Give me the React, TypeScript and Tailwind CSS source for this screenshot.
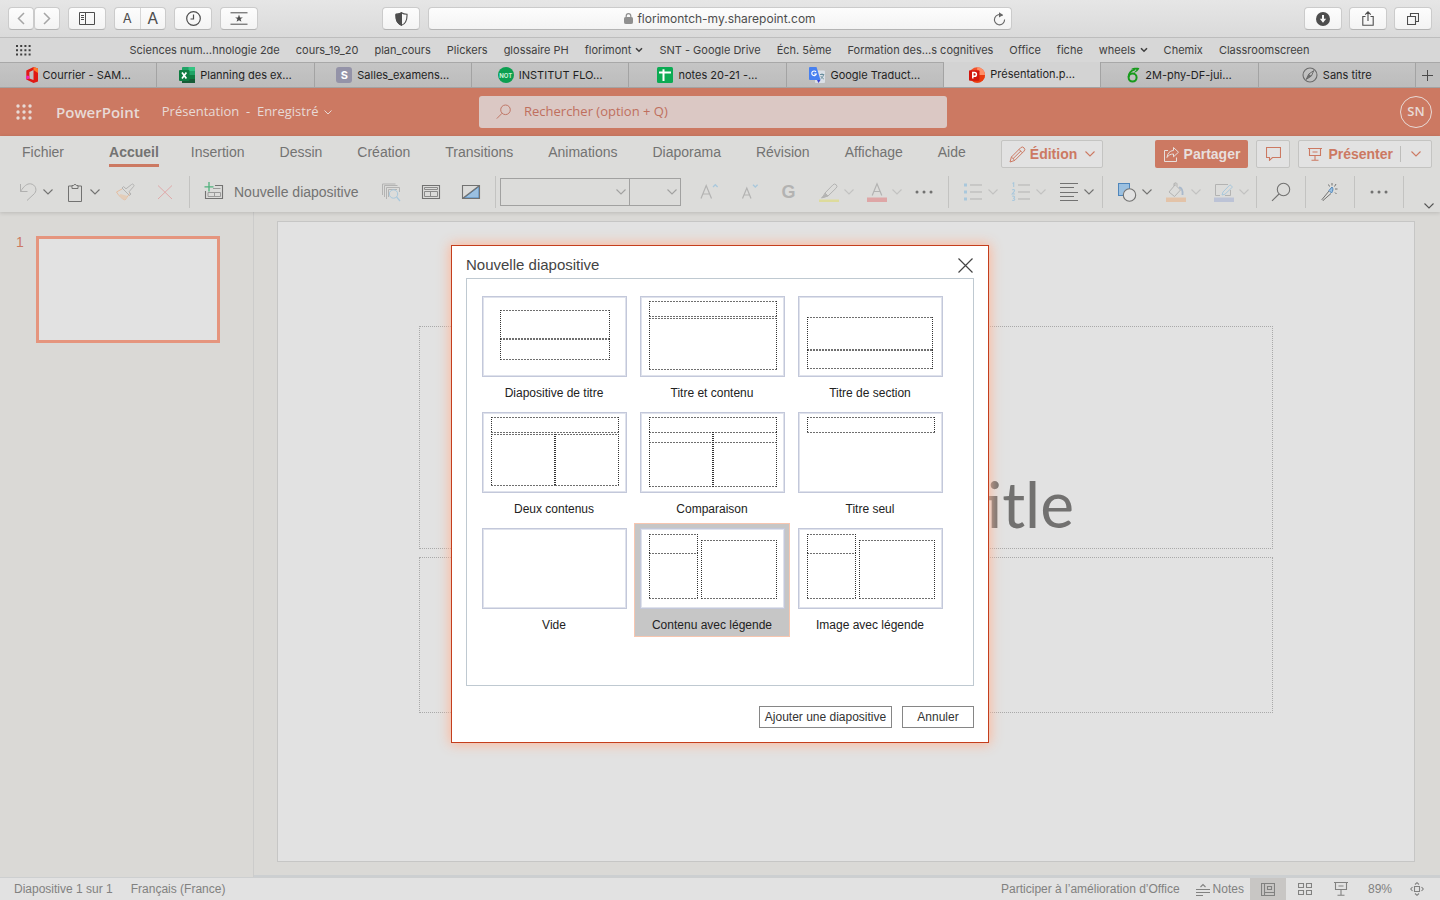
import React from 'react';

const SAFARI = "font-['Inter','Liberation_Sans',sans-serif]";
const SEGOE = "font-['Open_Sans','Noto_Sans',sans-serif]";

type IconProps = { children: React.ReactNode; className?: string; w?: number; h?: number };

function Icon({ children, className = '', w = 20, h = 20 }: IconProps) {
  return (
    <svg
      width={w}
      height={h}
      viewBox={`0 0 ${w} ${h}`}
      fill="none"
      stroke="currentColor"
      strokeWidth="1"
      className={`shrink-0 ${className}`}
      aria-hidden="true"
    >
      {children}
    </svg>
  );
}

function Chevron({ className = '' }: { className?: string }) {
  return (
    <Icon w={10} h={6} className={className}>
      <path d="M0.5 0.5 L5 5 L9.5 0.5" strokeWidth="1.1" />
    </Icon>
  );
}

/* ---------- Browser chrome ---------- */

const chromeButton =
  'flex h-[23px] items-center justify-center rounded-[4px] border border-[#cbcbcb] border-b-[#b4b4b4] bg-gradient-to-b from-[#fdfdfd] to-[#f3f3f3] text-[#4d4d4d]';

function BrowserToolbar() {
  return (
    <div className="grid h-[38px] grid-cols-[1fr_584px_1fr] items-center gap-2 border-b border-[#bdbdbd] bg-gradient-to-b from-[#e6e6e6] to-[#dadada] px-2">
      <div className="flex items-center">
        <button aria-label="Page précédente" className={`${chromeButton} w-[26px] text-[#a5a5a5]`}>
          <Icon w={8} h={13}><path d="M7 1 L1.5 6.5 L7 12" strokeWidth="1.5" /></Icon>
        </button>
        <button aria-label="Page suivante" className={`${chromeButton} w-[26px] text-[#a5a5a5]`}>
          <Icon w={8} h={13}><path d="M1 1 L6.5 6.5 L1 12" strokeWidth="1.5" /></Icon>
        </button>
        <button aria-label="Barre latérale" className={`${chromeButton} ml-2 w-[38px]`}>
          <Icon w={16} h={13}>
            <path d="M0.5 0.5 H15.5 V12.5 H0.5 Z M6.5 0.5 V12.5" />
            <path d="M2 3.5 H5 M2 5.5 H5 M2 7.5 H5" />
          </Icon>
        </button>
        <div className={`${chromeButton} ml-2 w-[52px]`}>
          <button aria-label="Réduire le texte" className="flex-1 border-r border-[#d6d6d6] text-[13px] leading-[21px]">A</button>
          <button aria-label="Agrandir le texte" className="flex-1 text-[16px] leading-[21px]">A</button>
        </div>
        <button aria-label="Historique" className={`${chromeButton} ml-2 w-[38px]`}>
          <Icon w={15} h={15}>
            <circle cx="7.5" cy="7.5" r="6.8" strokeWidth="1.2" />
            <path d="M7.5 3.5 V8 H4.5" strokeWidth="1.2" />
          </Icon>
        </button>
        <button aria-label="Favoris" className={`${chromeButton} ml-2 w-[38px]`}>
          <Icon w={18} h={13}>
            <path d="M0.5 0.8 H17.5 M0.5 12.2 H17.5" />
            <path d="M9 2.6 L10 5.4 H12.9 L10.6 7.1 L11.4 9.8 L9 8.2 L6.6 9.8 L7.4 7.1 L5.1 5.4 H8 Z" fill="currentColor" stroke="none" />
          </Icon>
        </button>
        <button aria-label="Rapport de confidentialité" className={`${chromeButton} ml-auto w-[38px]`}>
          <Icon w={13} h={14}>
            <path d="M6.5 0.7 C8 1.8 10 2.2 12 2.2 C12.3 8 11 11.5 6.5 13.3 C2 11.5 0.7 8 1 2.2 C3 2.2 5 1.8 6.5 0.7 Z" strokeWidth="1.1" />
            <path d="M6.5 0.7 V13.3 C2 11.5 0.7 8 1 2.2 C3 2.2 5 1.8 6.5 0.7 Z" fill="currentColor" />
          </Icon>
        </button>
      </div>
      <div className={`${chromeButton} relative text-[12px] text-[#3c3c3c]`}>
        <Icon w={9} h={11} className="mr-1 text-[#8f8f8f]">
          <rect x="0.5" y="4.5" width="8" height="6" rx="0.8" fill="currentColor" />
          <path d="M2.2 5 V3 A2.3 2.3 0 0 1 6.8 3 V5" strokeWidth="1.2" />
        </Icon>
        <span>florimontch-my.sharepoint.com</span>
        <button aria-label="Actualiser" className="absolute right-[5px] text-[#666666]">
          <Icon w={13} h={14}>
            <path d="M9.5 3.6 A5.1 5.1 0 1 0 11.6 7.6" strokeWidth="1.1" />
            <path d="M6 0.2 L10.2 2.9 L6 5.4 Z" fill="currentColor" stroke="none" />
          </Icon>
        </button>
      </div>
      <div className="flex items-center justify-end gap-[7px]">
        <button aria-label="Téléchargements" className={`${chromeButton} w-[38px]`}>
          <Icon w={14} h={14}>
            <circle cx="7" cy="7" r="7" fill="currentColor" stroke="none" />
            <path d="M7 3 V8" stroke="#f8f8f8" strokeWidth="2" />
            <path d="M3.8 6.8 H10.2 L7 10.8 Z" fill="#f8f8f8" stroke="none" />
          </Icon>
        </button>
        <button aria-label="Partager la page" className={`${chromeButton} w-[38px]`}>
          <Icon w={12} h={15}>
            <path d="M3.5 5.5 H0.8 V14.3 H11.2 V5.5 H8.5 M6 10 V1 M3.2 3.6 L6 0.8 L8.8 3.6" strokeWidth="1.1" />
          </Icon>
        </button>
        <button aria-label="Tous les onglets" className={`${chromeButton} w-[38px]`}>
          <Icon w={12} h={12}>
            <path d="M0.5 3.5 H8.5 V11.5 H0.5 Z M3.5 3.5 V0.5 H11.5 V8.5 H8.5" strokeWidth="1.1" />
          </Icon>
        </button>
      </div>
    </div>
  );
}

const bookmarks: { label: string; menu?: boolean }[] = [
  { label: 'Sciences num…hnologie 2de' },
  { label: 'cours_19_20' },
  { label: 'plan_cours' },
  { label: 'Plickers' },
  { label: 'glossaire PH' },
  { label: 'florimont', menu: true },
  { label: 'SNT - Google Drive' },
  { label: 'Éch. 5ème' },
  { label: 'Formation des…s cognitives' },
  { label: 'Office' },
  { label: 'fiche' },
  { label: 'wheels', menu: true },
  { label: 'Chemix' },
  { label: 'Classroomscreen' },
];

function BookmarkBar() {
  return (
    <nav aria-label="Signets" className="flex h-6 items-center bg-[#d7d7d7] px-4 text-[11px] text-[#404040]">
      <button aria-label="Sites favoris" className="text-[#404040]">
        <Icon w={15} h={11}>
          <path d="M0 1 H15 M0 5.2 H15 M0 9.4 H15" strokeWidth="2" strokeDasharray="2 2.2" />
        </Icon>
      </button>
      <div className="flex flex-1 items-center justify-center gap-4 whitespace-nowrap">
        {bookmarks.map((b) => (
          <a key={b.label} href="#" className="flex items-center gap-1">
            {b.label}
            {b.menu && (
              <Icon w={8} h={6}><path d="M1 1.2 L4 4.2 L7 1.2" strokeWidth="1.6" /></Icon>
            )}
          </a>
        ))}
      </div>
      <span className="w-4" />
    </nav>
  );
}

const OfficeLogo = (
  <Icon w={12} h={16}>
    <g stroke="none" fillRule="evenodd">
      <path d="M7.5 0 L12 1.6 V14.4 L7.5 16 L0.3 12.4 V3.6 Z M7.5 3 L3.4 5 V11.4 L7.5 13 Z" fill="#e01a14" />
      <path d="M7.5 0 L12 1.6 V6 L7.5 3 Z" fill="#ff7a2a" />
      <path d="M0.3 8.5 L3.4 9 V11.4 L0.3 12.4 Z" fill="#f028b8" />
    </g>
  </Icon>
);
const ExcelLogo = (
  <Icon w={16} h={16}>
    <g stroke="none">
      <rect x="3" width="13" height="16" rx="1" fill="#21a366" />
      <rect x="9.5" width="6.5" height="4" fill="#33c481" />
      <rect x="9.5" y="8" width="6.5" height="8" fill="#107c41" />
      <rect x="3" y="12" width="13" height="4" fill="#185c37" />
      <rect y="3" width="10.5" height="11" rx="1" fill="#107c41" />
    </g>
    <path d="M3 5.5 L7.4 11.5 M7.4 5.5 L3 11.5" stroke="#ffffff" strokeWidth="1.7" />
  </Icon>
);
const LetterLogo = (
  <span className="flex h-4 w-4 items-center justify-center rounded-[3px] bg-[#9493a8] text-[11px] font-bold text-white">S</span>
);
const NotLogo = (
  <span className="flex h-4 w-4 items-center justify-center rounded-full bg-[#0c9f50] text-[6px] font-bold text-[#c9efd8]">NOT</span>
);
const SheetLogo = (
  <Icon w={16} h={16}>
    <rect width="16" height="16" rx="1.5" fill="#0bab53" stroke="none" />
    <path d="M2 5.5 H14 M6.5 2.2 V14" stroke="#ffffff" strokeWidth="2" />
  </Icon>
);
const TranslateLogo = (
  <Icon w={16} h={16}>
    <g stroke="none">
      <rect x="6" y="3.5" width="10" height="12.5" rx="1" fill="#dadfe6" />
      <path d="M1 0 H7.5 L11.5 13 H1 A1 1 0 0 1 0 12 V1 A1 1 0 0 1 1 0 Z" fill="#4780f0" />
      <path d="M8 13 H11.5 L9.5 16 Z" fill="#3a3fd0" />
    </g>
    <path d="M7 5 A2.3 2.3 0 1 0 7.3 7 H5.2" stroke="#ffffff" strokeWidth="1.1" />
    <path d="M11 7.5 H15.2 M13 6.4 V7.5 M14.6 7.8 C14 10 12.6 11 11.6 11.8 M11.8 9 C12.6 10.5 13.6 11.2 14.8 12" stroke="#5f8796" strokeWidth="0.9" />
  </Icon>
);
const PowerPointLogo = (
  <Icon w={16} h={16}>
    <g stroke="none">
      <circle cx="8.2" cy="8" r="7.8" fill="#f2512b" />
      <path d="M8.2 0.2 A7.8 7.8 0 0 1 16 8 H8.2 Z" fill="#ff9068" />
      <path d="M0.4 8 H16 A7.8 7.8 0 0 1 0.4 8 Z" fill="#ea3c0e" />
      <rect y="3.2" width="10.5" height="10.5" rx="1" fill="#d2150d" />
    </g>
    <path d="M3.8 11.6 V5.6 H5.6 A1.8 1.8 0 0 1 5.6 9.2 H3.8" stroke="#ffffff" strokeWidth="1.5" />
  </Icon>
);
const OverleafLogo = (
  <Icon w={13} h={16}>
    <circle cx="5.6" cy="10.6" r="4" stroke="#189a1c" strokeWidth="2" />
    <path d="M1.6 10 C1.6 6 4 3.6 8 2.4" stroke="#189a1c" strokeWidth="1.8" />
    <path d="M3.8 2.4 C6 0.6 10 0.6 12.4 1.2 C11.5 3.4 9.5 5.2 6.5 5.8 C8 4.6 9 3.6 9.5 2.8 C8 2.3 6 2.1 3.8 2.4 Z" fill="#189a1c" stroke="none" />
  </Icon>
);
const CompassLogo = (
  <Icon w={16} h={16} className="text-[#6b6b6b]">
    <circle cx="8" cy="8" r="7" strokeWidth="1.1" />
    <path d="M11.8 3.6 L9.4 9 L4.2 12.4 L6.8 7 Z" strokeWidth="1" />
    <path d="M4.2 12.4 L6.8 7 L9.4 9 Z" fill="currentColor" stroke="none" />
  </Icon>
);

const tabs: { label: string; icon: React.ReactNode; active?: boolean }[] = [
  { label: 'Courrier - SAM…', icon: OfficeLogo },
  { label: 'Planning des ex…', icon: ExcelLogo },
  { label: 'Salles_examens…', icon: LetterLogo },
  { label: 'INSTITUT FLO…', icon: NotLogo },
  { label: 'notes 20-21 -…', icon: SheetLogo },
  { label: 'Google Traduct…', icon: TranslateLogo },
  { label: 'Présentation.p…', icon: PowerPointLogo, active: true },
  { label: '2M-phy-DF-jui…', icon: OverleafLogo },
  { label: 'Sans titre', icon: CompassLogo },
];

function TabBar() {
  return (
    <div className="flex h-[26px] border-b border-[#a3a3a3] text-[11px] text-[#1f1f1f]">
      {tabs.map((t) => (
        <button
          key={t.label}
          className={`flex min-w-0 flex-1 items-center justify-center gap-[5px] whitespace-nowrap border-r border-[#a3a3a3] ${
            t.active ? 'bg-[#d3d3d3]' : 'border-t border-t-[#a8a8a8] bg-gradient-to-b from-[#c5c5c5] to-[#bcbcbc]'
          }`}
        >
          {t.icon}
          {t.label}
        </button>
      ))}
      <button aria-label="Nouvel onglet" className="flex w-6 items-center justify-center border-t border-[#a8a8a8] bg-[#c0c0c0] text-[#4a4a4a]">
        <Icon w={11} h={11}><path d="M5.5 0 V11 M0 5.5 H11" /></Icon>
      </button>
    </div>
  );
}

/* ---------- Application header ---------- */

function AppHeader() {
  return (
    <header className={`flex h-12 shrink-0 items-center bg-[#cc7962] pr-2 text-[#e8dad6] ${SEGOE}`}>
      <div className="flex w-[479px] items-center">
        <button aria-label="Lanceur d'applications" className="ml-4">
          <Icon w={16} h={16}>
            <path d="M2 2 H15 M2 8 H15 M2 14 H15" strokeWidth="3.4" strokeLinecap="round" strokeDasharray="0.01 6" />
          </Icon>
        </button>
        <a href="#" className="ml-6 text-[15px] font-semibold">PowerPoint</a>
        <button className="ml-[22px] flex items-center gap-[5px] whitespace-pre text-[13px]">
          {'Présentation  -  Enregistré'}
          <Icon w={8} h={5}><path d="M0.5 0.5 L4 4 L7.5 0.5" /></Icon>
        </button>
      </div>
      <label className="flex h-8 w-[468px] items-center gap-3 rounded-[3px] bg-[#dbc8c4] pl-[17px] text-[#c07767]">
        <Icon w={16} h={16}>
          <circle cx="9.5" cy="5.8" r="4.8" />
          <path d="M6 9.3 L0.8 14.6" />
        </Icon>
        <input
          aria-label="Rechercher"
          placeholder="Rechercher (option + Q)"
          className="min-w-0 flex-1 bg-transparent text-[13px] outline-none placeholder:text-[#bf6f5e]"
        />
      </label>
      <button aria-label="Compte" className="ml-auto flex h-8 w-8 items-center justify-center rounded-full border border-[#e8dad6] text-[13px] font-semibold">
        SN
      </button>
    </header>
  );
}

/* ---------- Ribbon ---------- */

const ribbonTabs = ['Insertion', 'Dessin', 'Création', 'Transitions', 'Animations', 'Diaporama', 'Révision', 'Affichage', 'Aide'];
const whiteButton = 'flex h-7 items-center rounded-[2px] border border-[#c4c4c2] bg-[#e2e2e2] font-bold text-[#cc7962]';

function RibbonTabs() {
  return (
    <div className="flex h-9 items-start pl-[22px] pr-2 text-[14px] leading-5 text-[#737372]">
      <button className="mr-[45px] mt-[6px]">Fichier</button>
      <button className="mr-8 mt-[6px] border-b-[3px] border-[#cc7962] pb-[2px] font-bold">Accueil</button>
      <div className="mt-[6px] flex gap-[35px]">
        {ribbonTabs.map((t) => (
          <button key={t}>{t}</button>
        ))}
      </div>
      <button className={`${whiteButton} ml-[35px] mt-1 gap-1 px-[7px]`}>
        <Icon w={17} h={17}>
          <path d="M1 16 L2.4 11 L11.6 1.8 A2.2 2.2 0 0 1 15 5.2 L5.8 14.4 Z M2.4 11 L5.8 14.4 M10 3.4 L13.4 6.8 M4 12.7 L12 4.8" />
        </Icon>
        Édition
        <Chevron className="ml-1" />
      </button>
      <div className="ml-auto mt-1 flex gap-2">
        <button className="flex h-7 items-center gap-1 rounded-[2px] bg-[#cc7962] px-2 font-bold text-[#e8dfdc]">
          <Icon w={17} h={17}>
            <path d="M5 4.5 H1.5 V15.5 H13.5 V11.5 M10.5 1.5 L15.5 6.2 L10.5 10.8 V8 C7.5 8 5.5 9 4 11.5 C4.4 7.5 6.5 4.8 10.5 4.4 Z" />
          </Icon>
          Partager
        </button>
        <button aria-label="Commentaires" className={`${whiteButton} w-[34px] justify-center`}>
          <Icon w={15} h={14}><path d="M0.5 0.5 H14.5 V10.5 H6.5 L3.5 13.3 V10.5 H0.5 Z" strokeWidth="1.1" /></Icon>
        </button>
        <div className={`${whiteButton} pl-[9px]`}>
          <button className="flex items-center gap-[6px]">
            <Icon w={14} h={14}><path d="M0 1.5 H14 M1.5 1.5 V8.5 H12.5 V1.5 M4.5 5 H9.5 M7 8.5 V13 M3.5 13.3 H10.5" strokeWidth="1.1" /></Icon>
            Présenter
          </button>
          <span className="ml-[7px] h-4 w-px bg-[#bdbdbb]" />
          <button aria-label="Options de présentation" className="px-[10px]"><Chevron /></button>
        </div>
      </div>
    </div>
  );
}

type ToolProps = { label: string; children: React.ReactNode; menu?: boolean; off?: boolean; className?: string };

function Tool({ label, children, menu, off, className = '' }: ToolProps) {
  return (
    <button aria-label={label} className={`flex shrink-0 items-center gap-[5px] text-[#727271] ${className}`}>
      <Icon className={off ? 'text-[#b3b3b2]' : ''}>{children}</Icon>
      {menu && <Chevron className={off ? 'text-[#c2c2c1]' : ''} />}
    </button>
  );
}

function Divider({ className = 'mx-[14px]' }: { className?: string }) {
  return <span className={`h-8 w-px shrink-0 bg-[#c3c3c1] ${className}`} />;
}

function RibbonTools() {
  return (
    <div className="flex h-10 items-center pl-[18px] pr-[6px]">
      <Tool label="Annuler l'action" menu>
        <path d="M2.5 2 V9.5 H9.5 M2.5 9.5 C6 4 9 1.5 12.5 1.8 C17.5 2.5 19.5 8 16.5 11.5 L9 18.5" stroke="#b0b0af" />
      </Tool>
      <Tool label="Coller" menu className="ml-3">
        <path d="M7 4 H3.5 V19.5 H16.5 V4 H13 M7 6.5 V3.5 H8.5 A1.6 1.6 0 0 1 11.5 3.5 H13 V6.5 Z" />
      </Tool>
      <Tool label="Reproduire la mise en forme" off className="ml-[15px]">
        <path d="M7 7 L1.5 10 C4 14 6.5 16.5 10 18 L15 11" stroke="#e6bd9f" />
        <path d="M5.5 12 L12.5 14 L10 18 C7.5 17 5.8 15 4.5 13 Z" fill="#e3cdb9" stroke="none" />
        <path d="M7 6 L8.6 4.6 L11 6.8 L16.5 2.5 A1.4 1.4 0 0 1 18.5 4.6 L14 9.8 L16 12 L14.5 13.5 Z" />
      </Tool>
      <Tool label="Supprimer" className="ml-5">
        <path d="M3 3.5 L17 17 M17 3.5 L3 17" stroke="#e0a9a9" />
      </Tool>
      <Divider />
      <button className="flex shrink-0 items-center gap-[10px] text-[14px] text-[#737372]">
        <Icon>
          <path d="M11 3.5 H18.5 V16.5 H1.5 V9" strokeWidth="1.1" />
          <path d="M9 6.5 H16.5 M4 10.5 H16.5 V14.5 H4 Z M10.5 10.5 V14.5" stroke="#9b9b9a" />
          <path d="M5 0 V9.5 M0.5 4.8 H9.5" stroke="#4fb17c" strokeWidth="1.3" />
        </Icon>
        Nouvelle diapositive
      </button>
      <Tool label="Réutiliser les diapositives" off className="ml-[22px]">
        <path d="M5.5 17 H5.5 V5.5 H18.5 V10 M3.5 15 V3.5 H16.5 M1.5 13 V2 H14.5 M7.5 15 V7.5 H16" />
        <circle cx="12.5" cy="12" r="4.2" stroke="#a9c8dc" />
        <path d="M15.6 15 L19 19" stroke="#a9c8dc" strokeWidth="1.2" />
      </Tool>
      <Tool label="Disposition" className="ml-5">
        <path d="M1.5 3.5 H18.5 V16.5 H1.5 Z" strokeWidth="1.1" />
        <path d="M3.5 5.5 H16.5 V7.5 H3.5 Z M3.5 9.5 H16.5 V14.5 H3.5 Z M9.5 9.5 V14.5" stroke="#8b8b8a" />
      </Tool>
      <Tool label="Mise en forme de l'arrière-plan" className="ml-5">
        <path d="M3 16 L18 4.5 V16 Z" fill="#9bc0e0" stroke="#4f86bb" />
        <path d="M1.5 3.5 H18.5 V16.5 H1.5 Z M1.5 16.5 L18.5 3.5" strokeWidth="1.1" />
      </Tool>
      <Divider className="ml-[14px] mr-1" />
      <div className="flex h-7 w-[181px] shrink-0 border border-[#a1a1a0] text-[#a1a1a0]">
        <span className="relative flex flex-1 items-center border-r border-[#a1a1a0]">
          <select aria-label="Police" className="h-full w-full appearance-none bg-transparent" />
          <Chevron className="pointer-events-none absolute right-[3px]" />
        </span>
        <span className="relative flex w-[50px] items-center">
          <select aria-label="Taille de police" className="h-full w-full appearance-none bg-transparent" />
          <Chevron className="pointer-events-none absolute right-[3px]" />
        </span>
      </div>
      <Tool label="Agrandir la police" off className="ml-[18px]">
        <path d="M2 16.5 L7.2 3.5 L12.5 16.5 M3.8 12 H10.6" strokeWidth="1.2" />
        <path d="M14 5 L16.3 2.7 L18.6 5" stroke="#a9c8dc" strokeWidth="1.3" />
      </Tool>
      <Tool label="Réduire la police" off className="ml-5">
        <path d="M3.5 16.5 L7.8 6 L12 16.5 M5 13 H10.6" strokeWidth="1.2" />
        <path d="M14 2.8 L16.3 5 L18.6 2.8" stroke="#a9c8dc" strokeWidth="1.3" />
      </Tool>
      <button className="ml-5 w-5 shrink-0 text-center text-[18px] font-bold text-[#b3b3b2]">G</button>
      <Tool label="Surlignage" menu off className="ml-5">
        <path d="M6 11 L14 2.8 A2 2 0 0 1 17.2 6 L9 14 Z M6 11 L3.5 15.5 L9 14" />
        <path d="M6.5 12 L8.5 14 L2.5 16 Z" fill="currentColor" />
        <rect x="0" y="17.5" width="20" height="2.5" fill="#dddb9c" stroke="none" />
      </Tool>
      <Tool label="Couleur de police" menu off className="ml-[13px]">
        <path d="M5.2 13.5 L10 1.8 L14.8 13.5 M7 9.5 H13" strokeWidth="1.2" />
        <rect x="0" y="15.5" width="20" height="4.5" fill="#dea6a6" stroke="none" />
      </Tool>
      <Tool label="Autres options de police" className="ml-3">
        <path d="M3 10 H17.5" strokeWidth="3" strokeLinecap="round" strokeDasharray="0.01 7" />
      </Tool>
      <Divider />
      <Tool label="Puces" menu off>
        <path d="M7 3 H19 M7 10 H19 M7 17 H19" />
        <path d="M1 3 H4 M1 10 H4 M1 17 H4" stroke="#a9c8dc" strokeWidth="3" />
      </Tool>
      <Tool label="Numérotation" menu off className="ml-[13px]">
        <path d="M7 3 H19 M7 10 H19 M7 17 H19" />
        <path d="M1.5 1.5 L2.7 0.8 V5 M1.2 8 C2 7.2 3.8 7.4 3.5 9 L1.2 12 H4 M1.2 14.3 C2.5 13.8 3.8 14.3 3.5 15.5 C3.4 16 2.8 16.3 2.2 16.3 C4.8 16.5 4 19 1.2 18.3" stroke="#a9c8dc" strokeWidth="1.1" />
      </Tool>
      <Tool label="Alignement" menu className="ml-[13px]">
        <path d="M1 1.5 H19 M1 5.5 H15 M1 10.5 H19 M1 14.5 H15 M1 18.5 H19" strokeWidth="1.1" />
      </Tool>
      <Divider className="ml-2 mr-[14px]" />
      <Tool label="Formes" menu>
        <rect x="1.5" y="1.5" width="11" height="12" fill="#9bc0e0" stroke="#4f86bb" />
        <circle cx="12.5" cy="13" r="6.2" fill="#e2e2e2" strokeWidth="1.1" />
      </Tool>
      <Tool label="Remplissage" menu off className="ml-[14px]">
        <path d="M9 1 V4 M9 3 L3 10 L8.5 14.5 L14.5 8 L11 4.5 V1.8 A1.6 1.6 0 0 0 8 1.8 V4" />
        <path d="M13 5.5 C15.5 5.5 17 8 16.5 13" stroke="#a9b9cc" strokeWidth="1.8" />
        <rect x="0" y="15.5" width="20" height="4.5" fill="#e3c3a8" stroke="none" />
      </Tool>
      <Tool label="Contour" menu off className="ml-[13px]">
        <path d="M14 2.5 H1.5 V13.5 H6 M16.5 8 V13.5 H11" />
        <path d="M8 13 L9 10 L16 2.8 L18.5 5 L11 12.2 Z" stroke="#a9c8dc" />
        <rect x="0" y="15.5" width="20" height="4.5" fill="#bcc3d6" stroke="none" />
      </Tool>
      <Divider className="ml-[7px] mr-[14px]" />
      <Tool label="Rechercher dans la présentation">
        <circle cx="12.5" cy="7.5" r="6.2" strokeWidth="1.1" />
        <path d="M8 12 L1 18.8" strokeWidth="1.1" />
      </Tool>
      <Divider />
      <Tool label="Concepteur">
        <path d="M9 8.5 L12 5 C13.5 6.5 13 9 11.5 11 Z" fill="#9bc0e0" stroke="#4f86bb" />
        <path d="M9 9 L2 17.5 L3 18.5 L11 11.5" />
        <path d="M8.5 2.5 L9.5 4.5 M12 1 V3.5 M16 2 L14.5 4.5 M15 7 H17.5 M15 10.5 L16.5 12" />
      </Tool>
      <Divider />
      <Tool label="Autres commandes">
        <path d="M3 10 H17.5" strokeWidth="3" strokeLinecap="round" strokeDasharray="0.01 7" />
      </Tool>
      <Divider />
      <button aria-label="Réduire le ruban" className="mb-[3px] ml-auto self-end text-[#555555]">
        <Chevron />
      </button>
    </div>
  );
}

/* ---------- Workspace ---------- */

function Workspace() {
  return (
    <main className="flex flex-1 bg-[#dad9d6]">
      <aside className="w-[254px] shrink-0 border-r border-[#cccccb] pt-6">
        <button className="ml-4 flex w-[204px] items-start gap-3 text-[14px] leading-3 text-[#cc7962]">
          <span>1</span>
          <span className="h-[107px] flex-1 border-[3px] border-[#e5957e] bg-[#e2e2e2]" />
        </button>
      </aside>
      <section className="flex flex-1 flex-col border-b-2 border-[#cccfd1] pb-[13px] pl-[23px] pr-[25px] pt-[9px]">
        <div className="flex flex-1 flex-col gap-2 border border-[#c6c6c5] bg-[#e2e2e2] px-[141px] pt-[104px]">
          <div className="flex h-[223px] items-end justify-end border border-dotted border-[#a9a9a9] pr-[198px] font-['Lato','Open_Sans',sans-serif] text-[64px] leading-[88px] text-[#727170]">
            title
          </div>
          <div className="h-[156px] border border-dotted border-[#a9a9a9]" />
        </div>
      </section>
    </main>
  );
}

function StatusBar() {
  return (
    <footer className="flex h-[23px] shrink-0 items-center border-t border-[#cdcfd0] bg-[#e2e2e2] pl-[14px] pr-4 text-[12px] text-[#818180]">
      <span>Diapositive 1 sur 1</span>
      <button className="ml-[18px]">Français (France)</button>
      <a href="#" className="ml-auto">Participer à l’amélioration d’Office</a>
      <button className="ml-4 flex items-center gap-[3px]">
        <Icon w={14} h={13}><path d="M0 6.5 H14 M0 9.5 H14 M0 12.5 H7 M4.5 4 L7 1.5 L9.5 4" strokeWidth="1.1" /></Icon>
        Notes
      </button>
      <button aria-label="Mode Normal" className="ml-[6px] flex h-full w-9 items-center justify-center bg-[#c8c6c4]">
        <Icon w={14} h={13}><path d="M0.5 0.5 H13.5 V12.5 H0.5 Z M3.5 0.5 V12.5 M3.5 9.5 H13.5 M6.5 3.5 H10.5 V6.5 H6.5 Z" strokeWidth="1.1" /></Icon>
      </button>
      <button aria-label="Trieuse de diapositives" className="ml-3">
        <Icon w={14} h={12}><path d="M0.5 0.5 H5.5 V4.5 H0.5 Z M8.5 0.5 H13.5 V4.5 H8.5 Z M0.5 7.5 H5.5 V11.5 H0.5 Z M8.5 7.5 H13.5 V11.5 H8.5 Z" strokeWidth="1.1" /></Icon>
      </button>
      <button aria-label="Diaporama" className="ml-[22px]">
        <Icon w={14} h={14}><path d="M0 0.5 H14 M1.5 0.5 V7.5 H12.5 V0.5 M4.5 4 H9.5 M7 7.5 V13 M3.5 13.3 H10.5" strokeWidth="1.1" /></Icon>
      </button>
      <button className="ml-5">89%</button>
      <button aria-label="Ajuster à la fenêtre" className="ml-[18px]">
        <Icon w={14} h={14}><path d="M4.5 4.5 H9.5 V9.5 H4.5 Z M5 2.5 L7 0.7 L9 2.5 M5 11.5 L7 13.3 L9 11.5 M2.5 5 L0.7 7 L2.5 9 M11.5 5 L13.3 7 L11.5 9" strokeWidth="1.1" /></Icon>
      </button>
    </footer>
  );
}

/* ---------- New slide dialog ---------- */

/** A placeholder outline: left, top, right, bottom. */
type Box = [number, number, number, number];

const layouts: { name: string; boxes: Box[]; selected?: boolean }[] = [
  { name: 'Diapositive de titre', boxes: [[18, 14, 127, 42], [18, 43, 127, 63]] },
  { name: 'Titre et contenu', boxes: [[9, 5, 136, 20], [9, 22, 136, 73]] },
  { name: 'Titre de section', boxes: [[9, 21, 134, 53], [9, 54, 134, 72]] },
  { name: 'Deux contenus', boxes: [[9, 5, 136, 20], [9, 22, 72, 73], [73, 22, 136, 73]] },
  { name: 'Comparaison', boxes: [[9, 5, 136, 20], [9, 20, 136, 30], [9, 30, 136, 74], [72, 20, 73, 74]] },
  { name: 'Titre seul', boxes: [[9, 5, 136, 20]] },
  { name: 'Vide', boxes: [] },
  { name: 'Contenu avec légende', boxes: [[9, 6, 57, 25], [9, 25, 57, 70], [61, 12, 136, 70]], selected: true },
  { name: 'Image avec légende', boxes: [[9, 6, 57, 25], [9, 25, 57, 70], [61, 12, 136, 70]] },
];

function LayoutThumb({ boxes }: { boxes: Box[] }) {
  return (
    <svg width="145" height="81" viewBox="0 0 145 81" shapeRendering="crispEdges" aria-hidden="true">
      <rect x="0.5" y="0.5" width="144" height="80" fill="#ffffff" stroke="#c3c8da" />
      <rect x="1.5" y="1.5" width="142" height="78" fill="none" stroke="#dfe2ec" />
      {boxes.map(([l, t, r, b]) => (
        <g key={`${l}-${t}`} fill="none">
          <path d={`M${l} ${t + 0.5} H${r + 1} M${l} ${b + 0.5} H${r + 1}`} stroke="#6f6f6f" strokeDasharray="2 1" />
          <path d={`M${l + 0.5} ${t} V${b + 1} M${r + 0.5} ${t} V${b + 1}`} stroke="#333333" strokeDasharray="1 1" />
        </g>
      ))}
    </svg>
  );
}

function NewSlideDialog() {
  return (
    <div className="absolute inset-0 flex items-center justify-center">
      <div
        role="dialog"
        aria-modal="true"
        aria-labelledby="dialog-title"
        className="w-[538px] border border-[#c43e1c] bg-white px-[14px] pb-[14px] text-[12px] text-[#222222] shadow-[0_0_12px_1px_#ffb596]"
      >
        <div className="flex h-8 items-center justify-between pr-[1px] pt-[6px]">
          <h1 id="dialog-title" className="text-[15px] text-[#444444]">Nouvelle diapositive</h1>
          <button aria-label="Fermer" className="text-[#444444]">
            <Icon w={15} h={15}><path d="M0.5 0.5 L14.5 14.5 M14.5 0.5 L0.5 14.5" strokeWidth="1.2" /></Icon>
          </button>
        </div>
        <div className="grid h-[408px] grid-cols-[repeat(3,156px)] content-start gap-[2px] border border-[#bfc9d1] pl-[9px] pt-3">
          {layouts.map((l) => (
            <button
              key={l.name}
              aria-pressed={!!l.selected}
              className={`flex h-[114px] flex-col items-center gap-2 border pt-1 leading-4 ${
                l.selected ? 'border-[#f7c6b0] bg-[#c6c6c6]' : 'border-transparent'
              }`}
            >
              <LayoutThumb boxes={l.boxes} />
              {l.name}
            </button>
          ))}
        </div>
        <div className="mt-5 flex justify-end gap-[10px] text-[#333333]">
          <button className="h-[22px] w-[133px] whitespace-nowrap border border-[#868686]">Ajouter une diapositive</button>
          <button className="h-[22px] w-[72px] border border-[#868686]">Annuler</button>
        </div>
      </div>
    </div>
  );
}

export default function App() {
  return (
    <div className="flex min-h-screen flex-col font-['Liberation_Sans',Arial,sans-serif]">
      <div className={SAFARI}>
        <BrowserToolbar />
        <BookmarkBar />
        <TabBar />
      </div>
      <div className="relative flex flex-1 flex-col">
        <AppHeader />
        <div className="relative bg-[#dcdcda] shadow-[0_1px_4px_rgba(0,0,0,0.15)]">
          <RibbonTabs />
          <RibbonTools />
        </div>
        <Workspace />
        <StatusBar />
        <NewSlideDialog />
      </div>
    </div>
  );
}
